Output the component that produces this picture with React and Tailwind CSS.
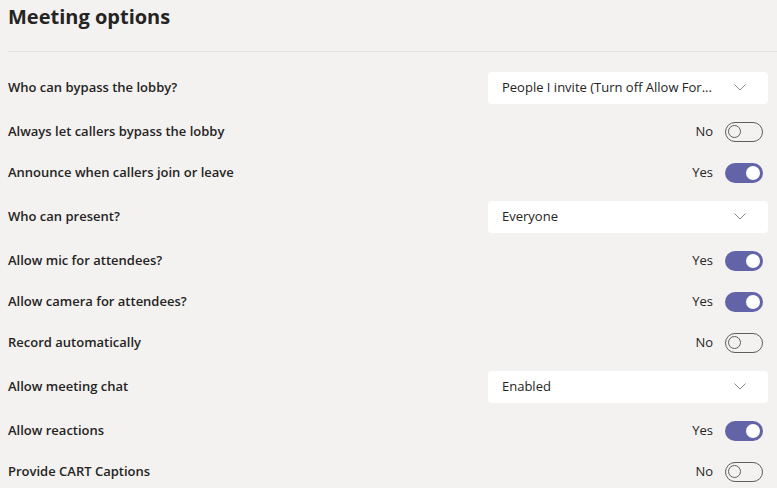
import { useState } from 'react';

const rows = [
  { label: 'Who can bypass the lobby?', type: 'select', value: 'People I invite (Turn off Allow For...' },
  { label: 'Always let callers bypass the lobby', type: 'toggle', on: false },
  { label: 'Announce when callers join or leave', type: 'toggle', on: true },
  { label: 'Who can present?', type: 'select', value: 'Everyone' },
  { label: 'Allow mic for attendees?', type: 'toggle', on: true },
  { label: 'Allow camera for attendees?', type: 'toggle', on: true },
  { label: 'Record automatically', type: 'toggle', on: false },
  { label: 'Allow meeting chat', type: 'select', value: 'Enabled' },
  { label: 'Allow reactions', type: 'toggle', on: true },
  { label: 'Provide CART Captions', type: 'toggle', on: false },
];

function Toggle({ initial }) {
  const [on, setOn] = useState(initial);
  return (
    <div className="flex items-center gap-3 mr-[14px]">
      <span className="text-[13px] text-[#252423] w-[21px] text-right">{on ? 'Yes' : 'No'}</span>
      <button
        onClick={() => setOn(!on)}
        className={
          on
            ? 'w-[38px] h-5 rounded-full bg-[#6264a7] flex items-center justify-end px-[3px]'
            : 'w-[38px] h-5 rounded-full border border-[#605e5c] flex items-center justify-start px-[2px]'
        }
      >
        {on ? (
          <span className="w-[14px] h-[14px] rounded-full bg-white" />
        ) : (
          <span className="w-[13px] h-[13px] rounded-full border border-[#605e5c]" />
        )}
      </button>
    </div>
  );
}

function Select({ value }) {
  return (
    <div className="w-[280px] h-8 bg-white rounded flex items-center justify-between pl-[14px] pr-[22px] mr-[9px]">
      <span className="text-[13px] text-[#252423] whitespace-nowrap">{value}</span>
      <svg width="12" height="7" viewBox="0 0 12 7" className="shrink-0 ml-2">
        <path d="M0.5 0.5 L6 6 L11.5 0.5" fill="none" stroke="#8a8886" strokeWidth="1" />
      </svg>
    </div>
  );
}

export default function App() {
  return (
    <div
      className="w-[777px] h-[488px] bg-[#f3f2f1] overflow-hidden"
      style={{ fontFamily: '"Open Sans", "Noto Sans", sans-serif' }}
    >
      <div className="pl-2">
        <h1 className="text-[20px] font-bold text-[#252423] h-[40px] pt-[3px] leading-[28px]">Meeting options</h1>
        <div className="h-px bg-[#e6e4e2] mt-[11px]" />
      </div>
      <div className="pl-2 mt-3">
        {rows.map((r) => (
          <div
            key={r.label}
            className={
              r.type === 'select'
                ? 'h-[47px] flex items-center justify-between'
                : 'h-[41px] flex items-center justify-between'
            }
          >
            <span className="text-[13px] font-semibold text-[#252423]">{r.label}</span>
            {r.type === 'select' ? <Select value={r.value} /> : <Toggle initial={r.on} />}
          </div>
        ))}
      </div>
    </div>
  );
}
